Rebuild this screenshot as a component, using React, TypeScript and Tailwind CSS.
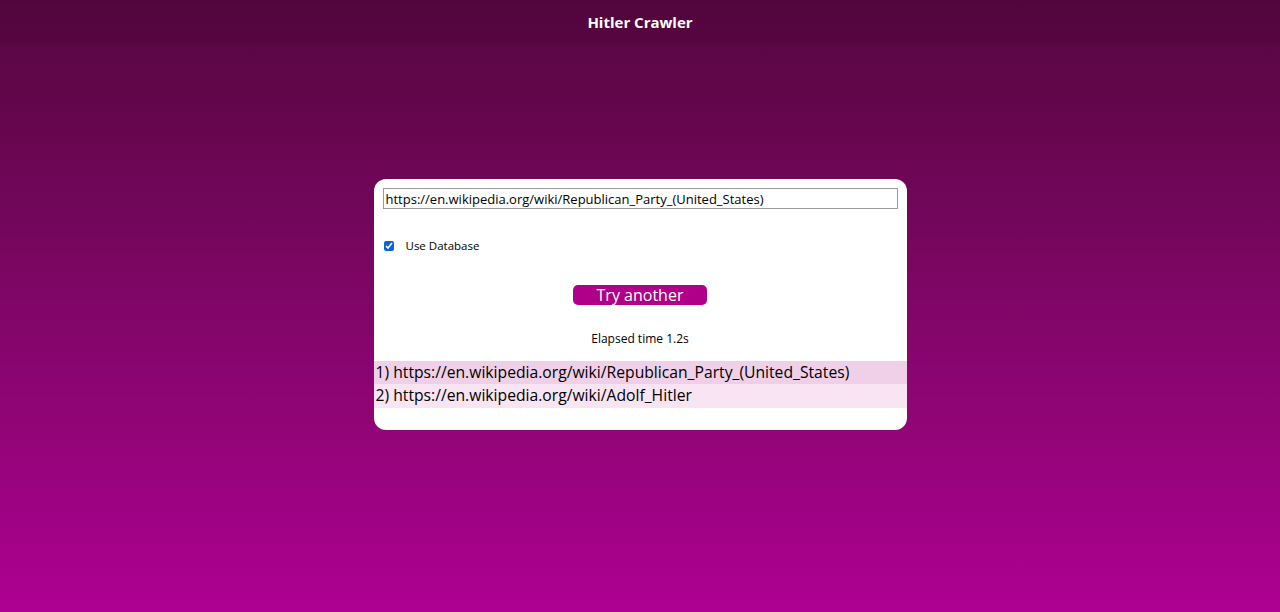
export default function App() {
  return (
    <div
      className="min-h-[612px] w-full flex flex-col bg-gradient-to-b from-[#55063f] to-[#ae0092]"
      style={{ fontFamily: '"Open Sans", "Noto Sans", sans-serif' }}
    >
      {/* Header */}
      <header className="h-[45px] bg-black/[0.03] flex items-center justify-center">
        <h1 className="text-white font-bold text-[15px]">Hitler Crawler</h1>
      </header>

      <main className="flex justify-center pt-[134px]">
        <div className="w-[533px] bg-white rounded-xl pt-[9px] pb-[22px]">
          <div className="px-[9px]">
            <input
              type="text"
              defaultValue="https://en.wikipedia.org/wiki/Republican_Party_(United_States)"
              className="block w-full h-[21px] border border-[#9a9a9a] px-[2px] text-[13px] text-black outline-none"
            />
          </div>

          <label className="flex items-center gap-[12px] pl-[10px] mt-[28px] text-[11.5px] text-black">
            <input type="checkbox" defaultChecked className="w-[10px] h-[10px] accent-[#0b63d6]" />
            Use Database
          </label>

          <div className="flex justify-center mt-[31px]">
            <button className="w-[134px] h-[20px] rounded-[5px] bg-[#b0008a] text-white text-[16px] leading-none flex items-center justify-center">
              Try another
            </button>
          </div>

          <p className="text-center text-[12px] text-black mt-[25px]">Elapsed time 1.2s</p>

          <ul className="mt-[13px] text-[15.7px] text-black">
            <li className="h-[23px] bg-[#efd0e8] px-[2px] flex items-center">
              1) https://en.wikipedia.org/wiki/Republican_Party_(United_States)
            </li>
            <li className="h-[24px] bg-[#f8e4f2] px-[2px] flex items-center">
              2) https://en.wikipedia.org/wiki/Adolf_Hitler
            </li>
          </ul>
        </div>
      </main>
    </div>
  );
}
